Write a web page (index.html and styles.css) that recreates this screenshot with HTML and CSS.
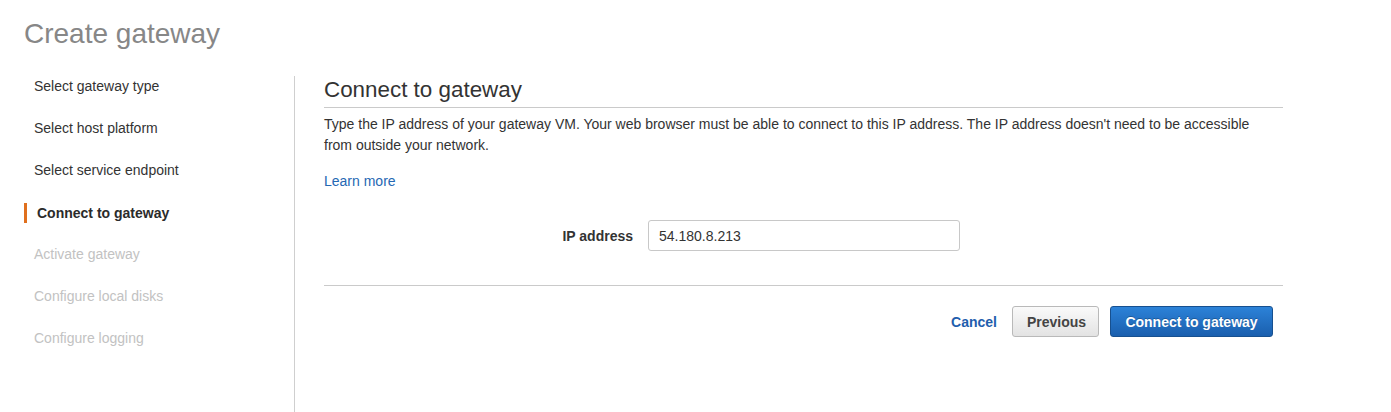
FILE: index.html
```html
<!DOCTYPE html>
<html lang="en">
<head>
<meta charset="utf-8">
<title>Create gateway</title>
<link rel="stylesheet" href="styles.css">
</head>
<body>
<div class="page">
  <h1 class="page-title">Create gateway</h1>
  <div class="wizard">
    <nav class="steps">
      <div class="step">Select gateway type</div>
      <div class="step">Select host platform</div>
      <div class="step">Select service endpoint</div>
      <div class="step step-active">Connect to gateway</div>
      <div class="step step-disabled">Activate gateway</div>
      <div class="step step-disabled">Configure local disks</div>
      <div class="step step-disabled">Configure logging</div>
    </nav>
    <main class="content">
      <h2 class="section-title">Connect to gateway</h2>
      <p class="desc">Type the IP address of your gateway VM. Your web browser must be able to connect to this IP address. The IP address doesn't need to be accessible from outside your network.</p>
      <a class="learn" href="#">Learn more</a>
      <div class="form-row">
        <label class="form-label" for="ip">IP address</label>
        <input class="form-input" id="ip" type="text" value="54.180.8.213">
      </div>
      <div class="actions">
        <a class="cancel" href="#">Cancel</a>
        <button class="btn btn-secondary" type="button">Previous</button>
        <button class="btn btn-primary" type="button">Connect to gateway</button>
      </div>
    </main>
  </div>
</div>
</body>
</html>
```
FILE: styles.css
```css
* { box-sizing: border-box; }
html, body {
  margin: 0;
  padding: 0;
  background: #fff;
}
body {
  font-family: "Liberation Sans", Arial, Helvetica, sans-serif;
  font-size: 14px;
  color: #333;
  height: 412px;
  overflow: hidden;
}
.page {
  display: flex;
  flex-direction: column;
  height: 412px;
}
.page-title {
  margin: 0;
  padding: 20px 0 0 24px;
  font-size: 28px;
  line-height: 28px;
  font-weight: normal;
  color: #878787;
  height: 76px;
}
.wizard {
  display: flex;
  flex: 1;
}
.steps {
  width: 295px;
  border-right: 1px solid #cfcfcf;
  padding-left: 24px;
  display: flex;
  flex-direction: column;
  gap: 22px;
}
.step {
  line-height: 20px;
  height: 20px;
  padding-left: 10px;
  color: #333;
  white-space: nowrap;
}
.step-active {
  border-left: 3px solid #e0701e;
  font-weight: bold;
  color: #2b2b2b;
  margin-top: 1px;
  margin-bottom: -1px;
}
.step-disabled {
  color: #c2c2c2;
}
.content {
  width: 988px;
  padding-left: 29px;
  padding-top: 1px;
  display: flex;
  flex-direction: column;
  align-items: stretch;
}
.section-title {
  margin: 0;
  font-size: 22.4px;
  line-height: 26px;
  font-weight: normal;
  color: #333;
  padding-bottom: 4px;
  border-bottom: 1px solid #cacaca;
}
.desc {
  margin: 6px 0 0 0;
  padding-right: 24px;
  line-height: 21px;
  color: #333;
}
.learn {
  margin-top: 15px;
  align-self: flex-start;
  line-height: 21px;
  color: #2568b3;
  text-decoration: none;
}
.form-row {
  margin-top: 28px;
  display: flex;
  align-items: center;
  gap: 15px;
  padding-bottom: 34px;
  border-bottom: 1px solid #cacaca;
}
.form-label {
  width: 309px;
  text-align: right;
  font-weight: bold;
  color: #333;
  line-height: 20px;
}
.form-input {
  width: 312px;
  height: 31px;
  border: 1px solid #c8c8c8;
  border-radius: 3px;
  padding: 0 10px;
  font-family: inherit;
  font-size: 14px;
  color: #333;
  outline: none;
}
.actions {
  margin-top: 20px;
  display: flex;
  justify-content: flex-end;
  align-items: center;
  padding-right: 10px;
}
.cancel {
  font-weight: bold;
  color: #1f5ead;
  text-decoration: none;
  margin-right: 15px;
}
.btn {
  height: 31px;
  border-radius: 3px;
  font-family: inherit;
  font-size: 14px;
  font-weight: bold;
  padding: 0 14px;
  cursor: pointer;
}
.btn-secondary {
  width: 87px;
  color: #444;
  background: linear-gradient(#fafafa, #e3e3e3);
  border: 1px solid #b9b9b9;
  margin-right: 11px;
}
.btn-primary {
  width: 163px;
  color: #fff;
  background: linear-gradient(#2c82d8, #1a5fae);
  border: 1px solid #17508f;
  text-shadow: 0 -1px 0 rgba(0, 0, 0, 0.25);
}
```
